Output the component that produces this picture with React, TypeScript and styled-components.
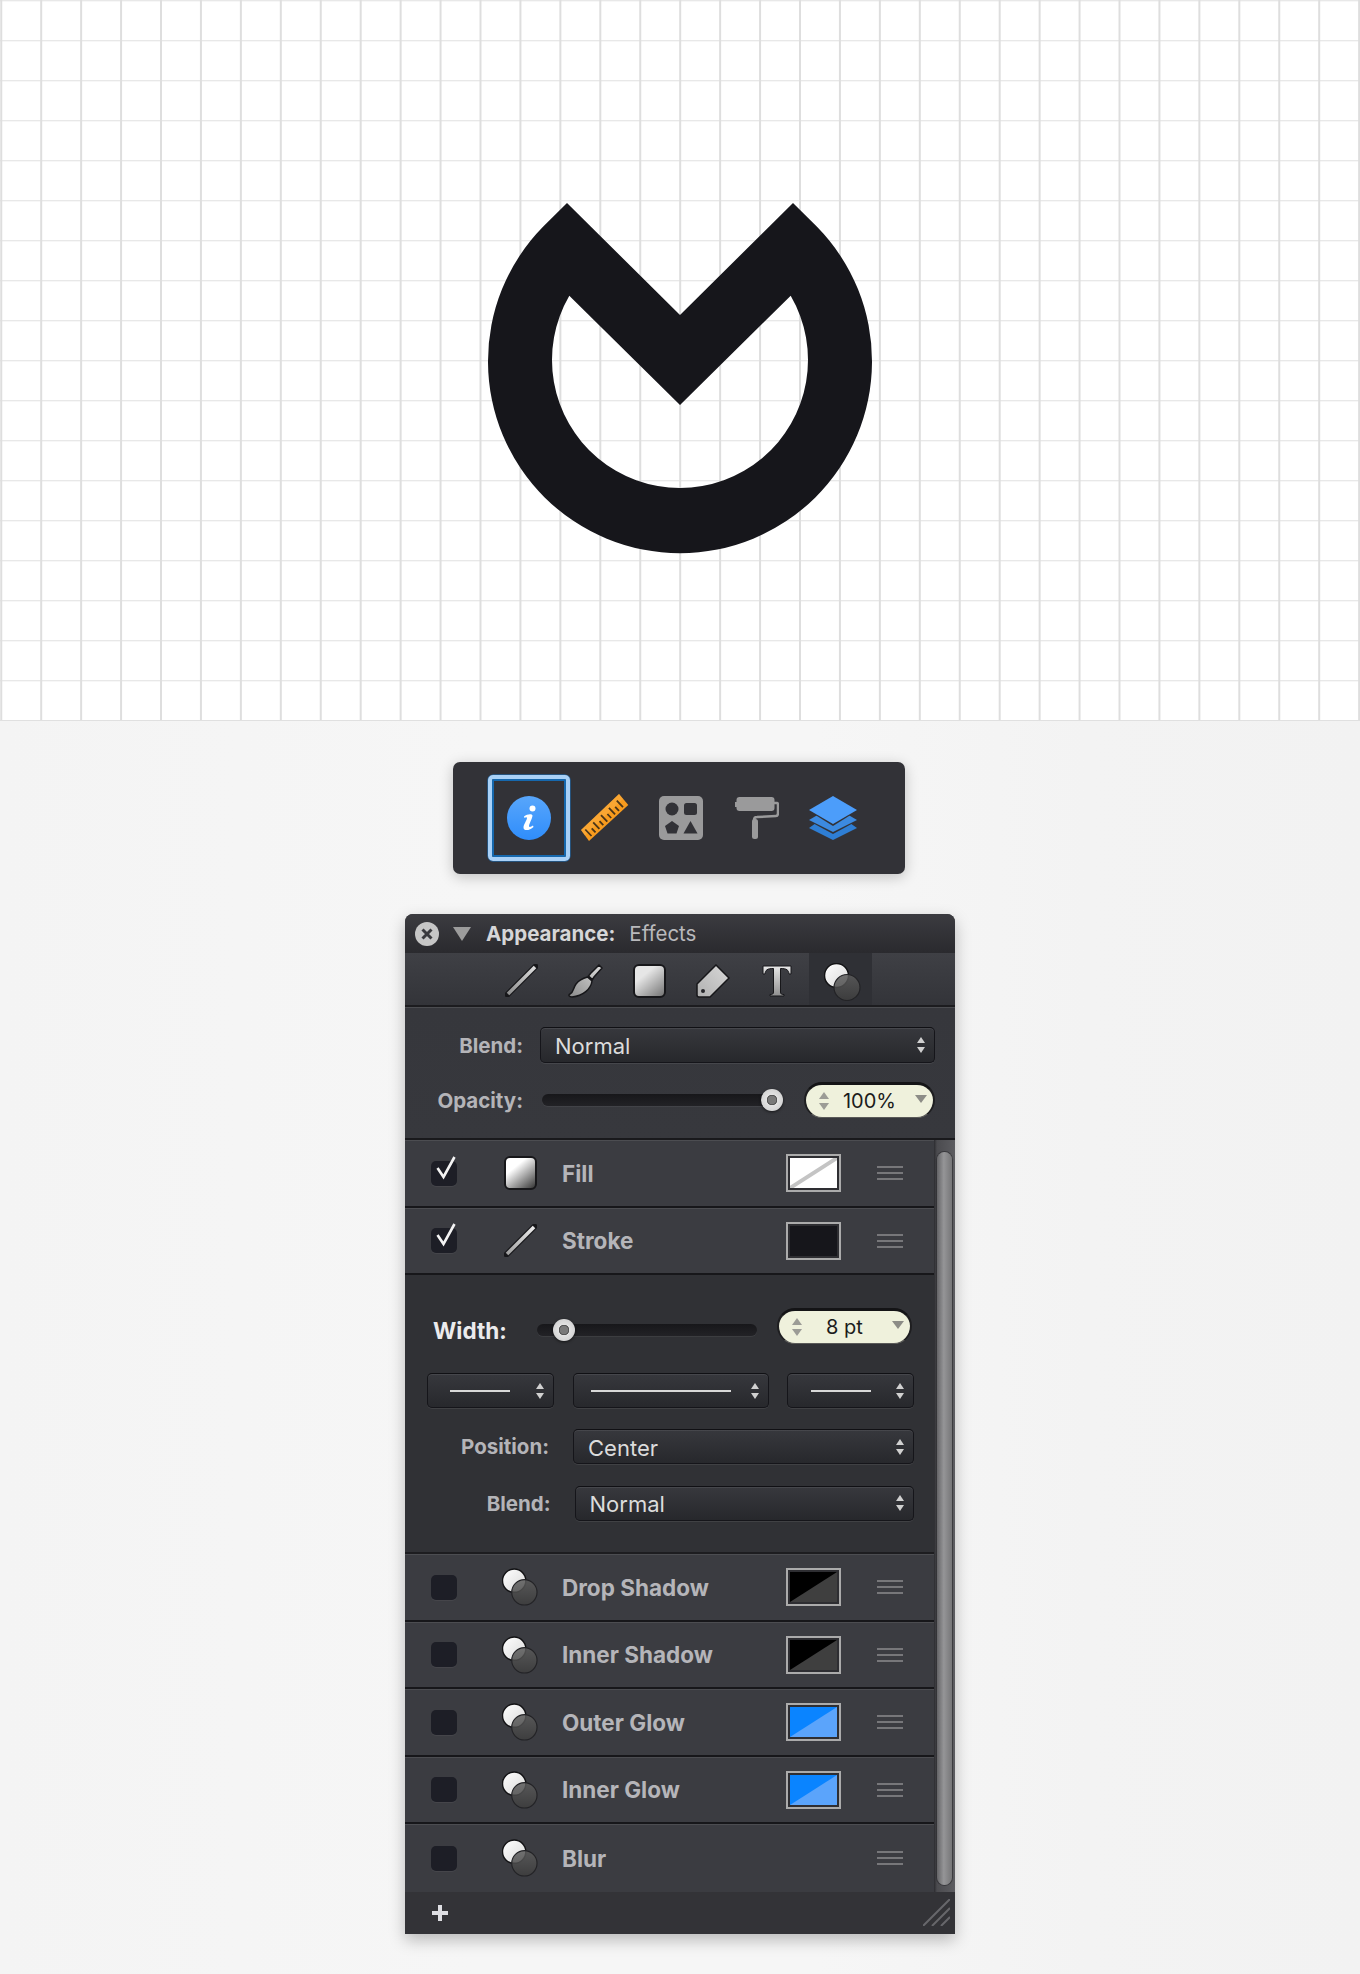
import React from 'react';
import styled, { createGlobalStyle } from 'styled-components';

const GlobalStyle = createGlobalStyle`
  html, body {
    margin: 0;
    padding: 0;
    background: #f3f3f3;
  }
  body {
    font-family: Inter, "Liberation Sans", sans-serif;
    -webkit-font-smoothing: antialiased;
  }
`;

const Page = styled.div`
  width: 1360px;
  height: 1974px;
  display: flex;
  flex-direction: column;
  align-items: center;
  background: linear-gradient(90deg, #f4f4f4 0%, #f6f6f6 35%, #f6f6f6 60%, #f3f3f3 80%, #f2f2f2 100%);
`;

const Canvas = styled.div`
  width: 100%;
  height: 721px;
  display: flex;
  align-items: flex-start;
  justify-content: center;
  padding-top: 195px;
  background-color: #fff;
  background-image:
    linear-gradient(90deg, #dedede 1.5px, transparent 1.5px),
    linear-gradient(180deg, #e0e0e0 1.5px, transparent 1.5px);
  background-size: 39.94px 40px;
  background-position: 0.25px 0.25px;
  border-bottom: 1px solid #e0e0e0;
  box-sizing: border-box;
`;

const Palette = styled.div`
  margin: 41px 2px 0 0;
  width: 452px;
  height: 112px;
  box-sizing: border-box;
  padding-left: 35px;
  display: flex;
  align-items: center;
  background: #323237;
  border-radius: 7px;
  box-shadow: 0 3px 14px rgba(0, 0, 0, 0.22);
`;

const PaletteItem = styled.div`
  width: 76px;
  height: 86px;
  flex: none;
  display: flex;
  align-items: center;
  justify-content: center;
`;

const PaletteFocus = styled.div`
  width: 82px;
  height: 86px;
  flex: none;
  margin-right: -3px;
  box-sizing: border-box;
  display: flex;
  align-items: center;
  justify-content: center;
  border: 4px solid #a9d1f7;
  border-radius: 5px;
  box-shadow: inset 0 0 0 2px #1668ad, 0 0 0 0.5px #1a74c4;
`;

const Panel = styled.div`
  margin-top: 40px;
  width: 550px;
  height: 1020px;
  display: flex;
  flex-direction: column;
  background: #333337;
  border-radius: 8px 8px 0 0;
  box-shadow: 0 6px 16px rgba(0, 0, 0, 0.25);
  overflow: hidden;
`;

const TitleBar = styled.div`
  height: 39px;
  flex: none;
  display: flex;
  align-items: center;
  padding-left: 10px;
  background: linear-gradient(180deg, #3b3b40, #2a2a2e);
`;

const CloseButton = styled.div`
  width: 24px;
  height: 24px;
  flex: none;
  display: flex;
  align-items: center;
  justify-content: center;
  border-radius: 50%;
  background: #c6c6c6;
`;

const Disclosure = styled.div`
  width: 0;
  height: 0;
  margin: 1px 15px 0 14px;
  border-left: 9px solid transparent;
  border-right: 9px solid transparent;
  border-top: 14px solid #9c9c9c;
`;

const TitleStrong = styled.span`
  font-size: 20.5px;
  font-weight: 700;
  color: #d6d6d8;
`;

const TitleLight = styled.span`
  margin-left: 14px;
  font-size: 20.5px;
  color: #b9b9bc;
`;

const TabBar = styled.div`
  height: 54px;
  flex: none;
  display: flex;
  align-items: stretch;
  padding-left: 84px;
  box-sizing: border-box;
  background: linear-gradient(180deg, #3f4045, #333439);
  border-bottom: 2px solid #1c1c1f;
`;

const Tab = styled.div<{ $active?: boolean }>`
  width: ${({ $active }) => ($active ? '63px' : '64px')};
  flex: none;
  box-sizing: border-box;
  padding: ${({ $active }) => ($active ? '6px 0 0 4px' : '3px 0 0')};
  display: flex;
  align-items: center;
  justify-content: center;
  background: ${({ $active }) => ($active ? '#2f3035' : 'transparent')};
`;

const TopForm = styled.div`
  height: 133px;
  flex: none;
  box-sizing: border-box;
  padding: 19px 20px 0 0;
  display: flex;
  flex-direction: column;
  background: linear-gradient(180deg, #36373c, #37383d);
  border-top: 1px solid #4b4c50;
  border-bottom: 2px solid #19191c;
`;

const FormRow = styled.div<{ $indent: number; $mt?: number }>`
  display: grid;
  grid-template-columns: ${({ $indent }) => $indent}px 1fr;
  column-gap: 17px;
  align-items: center;
  margin-top: ${({ $mt }) => $mt ?? 0}px;
`;

const OpacityRow = styled.div`
  display: flex;
  align-items: center;
  margin-top: 19px;
`;

const FormLabel = styled.div<{ $width?: number }>`
  width: ${({ $width }) => ($width ? `${$width}px` : 'auto')};
  flex: none;
  text-align: right;
  font-size: 20.5px;
  font-weight: 700;
  color: #b4b4b8;
`;

const WidthLabel = styled.div`
  width: 102px;
  flex: none;
  box-sizing: border-box;
  padding-left: 28px;
  font-size: 22.5px;
  font-weight: 700;
  color: #ebebed;
`;

const Select = styled.div<{ $height?: number }>`
  position: relative;
  height: ${({ $height }) => $height ?? 35}px;
  box-sizing: border-box;
  display: flex;
  align-items: center;
  padding: 2px 0 0 14px;
  border: 1px solid #15151a;
  border-top-color: #101014;
  border-radius: 5px;
  background: linear-gradient(180deg, #37383d, #27282c);
  box-shadow: inset 0 1px 0 rgba(255, 255, 255, 0.08), 0 1px 0 rgba(255, 255, 255, 0.08);
  font-size: 22px;
  color: #dcdcdc;
`;

const StepperWrap = styled.div`
  position: absolute;
  right: 9px;
  top: 50%;
  transform: translateY(-50%);
  display: flex;
  flex-direction: column;
  gap: 4px;
`;

const ArrowUp = styled.div<{ $color?: string; $size?: number }>`
  width: 0;
  height: 0;
  border-left: ${({ $size }) => $size ?? 4}px solid transparent;
  border-right: ${({ $size }) => $size ?? 4}px solid transparent;
  border-bottom: ${({ $size }) => ($size ?? 4) + 2}px solid ${({ $color }) => $color ?? '#d0d0d0'};
`;

const ArrowDown = styled.div<{ $color?: string; $size?: number }>`
  width: 0;
  height: 0;
  border-left: ${({ $size }) => $size ?? 4}px solid transparent;
  border-right: ${({ $size }) => $size ?? 4}px solid transparent;
  border-top: ${({ $size }) => ($size ?? 4) + 2}px solid ${({ $color }) => $color ?? '#d0d0d0'};
`;

const SliderTrack = styled.div<{ $width: number; $ml: number }>`
  position: relative;
  width: ${({ $width }) => $width}px;
  height: 12px;
  flex: none;
  margin-left: ${({ $ml }) => $ml}px;
  border-radius: 6px;
  background: linear-gradient(180deg, #17171a, #222226);
  box-shadow: 0 1px 0 rgba(255, 255, 255, 0.06);
`;

const SliderKnob = styled.div<{ $left: number }>`
  position: absolute;
  left: ${({ $left }) => $left}px;
  top: -5px;
  width: 22px;
  height: 22px;
  margin-left: -11px;
  box-sizing: border-box;
  border-radius: 50%;
  background: radial-gradient(circle, #7a7a7a 0 4px, #565656 4.5px 5px, #e2e2e2 5.5px, #c8c8c8 100%);
  box-shadow: 0 1px 3px rgba(0, 0, 0, 0.6);
`;

const Pill = styled.div<{ $width: number; $ml: number; $top?: boolean }>`
  position: relative;
  width: ${({ $width }) => $width}px;
  height: 36px;
  flex: none;
  margin-left: ${({ $ml }) => $ml}px;
  align-self: ${({ $top }) => ($top ? 'flex-start' : 'auto')};
  box-sizing: border-box;
  display: flex;
  align-items: center;
  justify-content: center;
  border-radius: 18px;
  background: #eff1dc;
  border-top: 3px solid #141416;
  border-bottom: 1px solid #5a5a58;
  border-left: 2px solid #1e1e20;
  border-right: 2px solid #1e1e20;
  font-size: 20px;
  color: #1b1b1b;
`;

const PillStepper = styled.div`
  position: absolute;
  left: 13px;
  top: 50%;
  transform: translateY(-50%);
  display: flex;
  flex-direction: column;
  gap: 4px;
`;

const PillCaret = styled.div`
  position: absolute;
  right: 6px;
  top: 10px;
`;

const Body = styled.div`
  flex: 1;
  display: flex;
  min-height: 0;
`;

const RowsColumn = styled.div`
  width: 529px;
  flex: none;
  display: flex;
  flex-direction: column;
`;

const ScrollColumn = styled.div`
  width: 21px;
  flex: none;
  box-sizing: border-box;
  padding: 12px 3px 7px;
  background: linear-gradient(90deg, #2c2c30 0, #4b4b4f 3px, #5c5c60 100%);
`;

const ScrollThumb = styled.div`
  height: 100%;
  border-radius: 8px;
  background: linear-gradient(90deg, #646467, #959597 45%, #767678);
  box-shadow: 0 0 0 1px rgba(40, 40, 44, 0.6);
`;

const Row = styled.div<{ $last?: boolean }>`
  height: 67.5px;
  flex: none;
  box-sizing: border-box;
  display: flex;
  align-items: center;
  padding-left: 26px;
  background: #3b3c41;
  border-top: 1px solid #4c4d51;
  border-bottom: ${({ $last }) => ($last ? 'none' : '2px solid #17171a')};
`;

const Checkbox = styled.div`
  position: relative;
  width: 26px;
  height: 25px;
  flex: none;
  border-radius: 5px;
  background: #1d1e26;
  box-shadow: 0 1px 0 rgba(255, 255, 255, 0.05);
`;

const CheckMark = styled.svg`
  position: absolute;
  left: 5px;
  top: -5px;
`;

const RowIcon = styled.div`
  width: 36px;
  height: 38px;
  flex: none;
  margin-left: 45px;
  display: flex;
  align-items: center;
  justify-content: center;
`;

const RowLabel = styled.div`
  flex: 1;
  margin-left: 24px;
  font-size: 22.5px;
  font-weight: 700;
  color: #b5b5b9;
`;

const Swatch = styled.div`
  width: 55px;
  height: 38px;
  flex: none;
  box-sizing: border-box;
  border: 2px solid #ababab;
  background: #2e2e32;
  padding: 2px;
`;

const SwatchSpacer = styled.div`
  width: 55px;
  flex: none;
`;

const SwatchArt = styled.svg`
  display: block;
`;

const Handle = styled.div`
  width: 26px;
  flex: none;
  margin: 0 31px 0 36px;
  display: flex;
  flex-direction: column;
  gap: 4px;
`;

const HandleLine = styled.div`
  height: 2px;
  background: #77777a;
`;

const StrokeForm = styled.div`
  height: 279px;
  flex: none;
  box-sizing: border-box;
  padding-top: 33px;
  display: flex;
  flex-direction: column;
  background: #303135;
  border-bottom: 2px solid #1d1d20;
`;

const WidthRow = styled.div`
  display: flex;
  align-items: center;
  height: 44px;
`;

const LineRow = styled.div`
  display: flex;
  margin: 21px 0 0 22px;
`;

const LineSelect = styled(Select)<{ $width: number; $mr?: number; $pad: number }>`
  width: ${({ $width }) => $width}px;
  margin-right: ${({ $mr }) => $mr ?? 0}px;
  padding: 0 0 0 ${({ $pad }) => $pad}px;
`;

const LineSample = styled.div<{ $width: number }>`
  width: ${({ $width }) => $width}px;
  height: 2px;
  background: #d8d8d8;
`;

const StrokeFieldRow = styled.div<{ $mt: number; $labelWidth: number }>`
  display: grid;
  grid-template-columns: ${({ $labelWidth }) => $labelWidth}px 1fr;
  column-gap: 24px;
  width: 508.5px;
  align-items: center;
  margin-top: ${({ $mt }) => $mt}px;
`;

const Footer = styled.div`
  height: 42.5px;
  flex: none;
  display: flex;
  align-items: center;
  justify-content: space-between;
  padding: 0 5px 0 27px;
  background: #333337;
`;

const PlusGlyph = styled.div`
  width: 16px;
  height: 16px;
  background:
    linear-gradient(#dedee2, #dedee2) center / 16px 4px no-repeat,
    linear-gradient(#dedee2, #dedee2) center / 4px 16px no-repeat;
`;

/* ---- drawings ---- */

const Logo = () => (
  <svg width="400" height="370" viewBox="480 195 400 370">
    <path
      fillRule="evenodd"
      fill="#16161b"
      d="M567 203 L680 315 L793 203 L817 226.7 A192 192 0 1 1 543 226.7 Z M569.3 295.7 A128 128 0 1 0 790.7 295.7 L680 405 Z"
    />
  </svg>
);

const InfoIcon = () => (
  <svg width="44" height="44" viewBox="0 0 44 44">
    <defs>
      <linearGradient id="infoFill" x1="0" y1="0" x2="0" y2="1">
        <stop offset="0" stopColor="#58a6fb" />
        <stop offset="1" stopColor="#2f8dfb" />
      </linearGradient>
    </defs>
    <circle cx="22" cy="22" r="22" fill="url(#infoFill)" />
    <circle cx="25.5" cy="12.5" r="3" fill="#fff" />
    <path fill="#fff" d="M17 20.5 C20 18 25 17.5 25.5 19.5 C25.5 22 22.5 27 22 30 C22 31.5 24 31 26 29.5 L26.5 31 C23 34.5 16.5 35.5 16.5 31.5 C16.5 28.5 20 24 20 22 C20 20.8 18.5 21.2 17.5 22 Z" />
  </svg>
);

// ticks stand on the lower right edge of the ruler, long and short in turn
const rulerTicks = [0.1, 0.2, 0.3, 0.4, 0.5, 0.6, 0.7, 0.8, 0.9].map((t, i) => {
  const x = 8 + 39.3 * t - 1.4;
  const y = 47 - 36 * t - 1.4;
  const len = i % 2 === 0 ? 9 : 5.5;
  return `M${x.toFixed(1)} ${y.toFixed(1)} L${(x - len * 0.69).toFixed(1)} ${(y - len * 0.72).toFixed(1)}`;
});

const RulerIcon = () => (
  <svg width="48" height="48" viewBox="0 0 48 48">
    <path fill="#f89b1e" d="M38 0 L47.3 11 L8 47 L0 36 Z" />
    <path fill="#fdb44c" d="M38 0 L42 5 L4 41.5 L0 36 Z" opacity="0.45" />
    <path stroke="#4a3518" strokeWidth="1.8" fill="none" d={rulerTicks.join(' ')} />
  </svg>
);

const ShapesIcon = () => (
  <svg width="44" height="44" viewBox="0 0 44 44">
    <rect width="44" height="44" rx="5" fill="#9a9a9b" />
    <circle cx="13" cy="13" r="6.5" fill="#323237" />
    <rect x="25" y="7" width="13" height="12" rx="2.5" fill="#323237" />
    <path fill="#323237" d="M13 25 L20 30 L17.5 37.5 L8.5 37.5 L6 30 Z" />
    <path fill="#323237" d="M31.5 25 L38.5 37.5 L24.5 37.5 Z" />
  </svg>
);

const RollerIcon = () => (
  <svg width="44" height="42" viewBox="0 0 44 42">
    <rect x="1.5" y="0" width="38" height="14" rx="3" fill="#9a9a9b" />
    <rect x="0" y="5" width="3" height="5" fill="#9a9a9b" />
    <path fill="none" stroke="#9a9a9b" strokeWidth="2.5" d="M39 6 L42 6 Q43 6 43 8 L43 16 Q43 19 41 19 L22 20 Q19 20 19 23 L19 28" />
    <rect x="17" y="22" width="6" height="20" rx="2.5" fill="#9a9a9b" />
  </svg>
);

const LayersIcon = () => (
  <svg width="48" height="44" viewBox="0 0 48 44">
    <path fill="#2e7ed4" d="M24 15 L48 32 L24 44 L0 32 Z" />
    <path fill="#323237" d="M24 7 L48 25 L24 38 L0 25 Z" />
    <path fill="#3c8ae0" d="M24 10 L48 24 L24 36 L0 24 Z" />
    <path fill="#323237" d="M24 0 L48 15 L24 30 L0 15 Z" />
    <path fill="#4c9dfa" d="M24 0 L48 14 L24 28 L0 14 Z" />
  </svg>
);

const CloseX = () => (
  <svg width="14" height="14" viewBox="0 0 14 14">
    <path d="M2.5 2.5 L11.5 11.5 M11.5 2.5 L2.5 11.5" stroke="#3a3a3e" strokeWidth="3" />
  </svg>
);

const LineToolIcon = ({ id, light, dark }: { id: string; light: string; dark: string }) => (
  <svg width="33" height="33" viewBox="0 0 33 33">
    <defs>
      <linearGradient id={id} x1="0" y1="1" x2="1" y2="0">
        <stop offset="0" stopColor={dark} />
        <stop offset="1" stopColor={light} />
      </linearGradient>
    </defs>
    <path d="M2.5 30.5 L30.5 2.5" stroke="#17171a" strokeWidth="6" strokeLinecap="round" />
    <path d="M3 30 L30 3" stroke={`url(#${id})`} strokeWidth="3.6" />
  </svg>
);

const BrushIcon = () => (
  <svg width="35" height="34" viewBox="0 0 35 34">
    <defs>
      <linearGradient id="brushGrad" x1="0" y1="1" x2="1" y2="0">
        <stop offset="0" stopColor="#8a8a8a" />
        <stop offset="1" stopColor="#dedede" />
      </linearGradient>
    </defs>
    <path
      fill="url(#brushGrad)"
      stroke="#17171a"
      strokeWidth="1.5"
      d="M31 1 L34 4 L26 13 L24.5 15.5 L20.5 12 L22.5 9.5 Z M19.5 13 L24 17 C23 25 15 32 4 33 C1 33 0 31 2 30 C6 28 5 24 8 20 C11 16 16 14 19.5 13 Z"
    />
  </svg>
);

const FillToolIcon = ({ id, light, dark }: { id: string; light: string; dark: string }) => (
  <svg width="33" height="34" viewBox="0 0 33 34">
    <defs>
      <linearGradient id={id} x1="0.1" y1="0" x2="0.9" y2="1">
        <stop offset="0" stopColor={light} />
        <stop offset="0.3" stopColor={light} />
        <stop offset="1" stopColor={dark} />
      </linearGradient>
    </defs>
    <rect x="1" y="1" width="31" height="32" rx="5" fill={`url(#${id})`} stroke="#17171a" strokeWidth="2" />
  </svg>
);

const TagIcon = () => (
  <svg width="34" height="34" viewBox="0 0 34 34">
    <defs>
      <linearGradient id="tagGrad" x1="0" y1="1" x2="1" y2="0">
        <stop offset="0" stopColor="#b0b0b0" />
        <stop offset="1" stopColor="#d8d8d8" />
      </linearGradient>
    </defs>
    <path
      fill="url(#tagGrad)"
      stroke="#17171a"
      strokeWidth="1.5"
      d="M20 1 L33 14 L14 33 L3 33 C1.5 33 1 32 1 31 L1 20 Z"
    />
    <circle cx="7" cy="27" r="2" fill="#26262a" />
  </svg>
);

const TypeIcon = () => (
  <svg width="30" height="32" viewBox="0 0 30 32">
    <defs>
      <linearGradient id="typeGrad" x1="0" y1="0" x2="0" y2="1">
        <stop offset="0" stopColor="#e8e8e8" />
        <stop offset="1" stopColor="#8f8f8f" />
      </linearGradient>
    </defs>
    <path
      fill="url(#typeGrad)"
      stroke="#17171a"
      strokeWidth="1"
      d="M1 1 L29 1 L29 9 L27 9 C26.5 5 25 3.5 18.5 3.5 L18.5 27 C18.5 29 19.5 29.5 22 29.5 L22 31 L8 31 L8 29.5 C10.5 29.5 11.5 29 11.5 27 L11.5 3.5 C5 3.5 3.5 5 3 9 L1 9 Z"
    />
  </svg>
);

const EffectIcon = ({ id }: { id: string }) => (
  <svg width="37" height="38" viewBox="0 0 37 38">
    <defs>
      <linearGradient id={`${id}w`} x1="0" y1="0" x2="1" y2="1">
        <stop offset="0" stopColor="#ffffff" />
        <stop offset="1" stopColor="#d8d8d8" />
      </linearGradient>
      <linearGradient id={`${id}d`} x1="0" y1="0" x2="0" y2="1">
        <stop offset="0" stopColor="#5c5c5c" />
        <stop offset="1" stopColor="#3e3e3e" />
      </linearGradient>
    </defs>
    <circle cx="12.5" cy="12.5" r="12" fill={`url(#${id}w)`} stroke="#121214" strokeWidth="1.5" />
    <circle cx="23" cy="24.5" r="13" fill={`url(#${id}d)`} fillOpacity="0.85" stroke="#232326" strokeWidth="1.2" />
  </svg>
);

const CheckIcon = () => (
  <CheckMark width="20" height="24" viewBox="0 0 20 24">
    <path d="M1.5 12 L7.5 21 L18.5 1" fill="none" stroke="#f4f4f4" strokeWidth="2.6" />
  </CheckMark>
);

const Grip = () => (
  <svg width="27" height="27" viewBox="0 0 27 27">
    <path d="M0 27 L27 0 M9 27 L27 9 M18 27 L27 18" stroke="#67676b" strokeWidth="2" />
  </svg>
);

type SwatchKind = 'none' | 'dark' | 'shadow' | 'blue';

const SwatchFill = ({ kind }: { kind: SwatchKind }) => {
  if (kind === 'none') {
    return (
      <SwatchArt width="47" height="30" viewBox="0 0 47 30">
        <rect width="47" height="30" fill="#fff" />
        <path d="M0 30 L47 0" stroke="#c4c4c4" strokeWidth="4" />
      </SwatchArt>
    );
  }
  if (kind === 'dark') {
    return (
      <SwatchArt width="47" height="30" viewBox="0 0 47 30">
        <rect width="47" height="30" fill="#16161b" />
      </SwatchArt>
    );
  }
  const a = kind === 'shadow' ? '#000000' : '#0a84ff';
  const b = kind === 'shadow' ? '#3f3f3f' : '#5ba4fb';
  return (
    <SwatchArt width="47" height="30" viewBox="0 0 47 30">
      <rect width="47" height="30" fill={b} />
      <path d="M0 0 L47 0 L0 30 Z" fill={a} />
    </SwatchArt>
  );
};

const Stepper = ({ color, size }: { color?: string; size?: number }) => (
  <>
    <ArrowUp $color={color} $size={size} />
    <ArrowDown $color={color} $size={size} />
  </>
);

const EffectRow = ({
  label,
  kind,
  checked,
  icon,
  last,
}: {
  label: string;
  kind?: SwatchKind;
  checked?: boolean;
  icon: React.ReactNode;
  last?: boolean;
}) => (
  <Row $last={last}>
    <Checkbox>{checked && <CheckIcon />}</Checkbox>
    <RowIcon>{icon}</RowIcon>
    <RowLabel>{label}</RowLabel>
    {kind ? (
      <Swatch>
        <SwatchFill kind={kind} />
      </Swatch>
    ) : (
      <SwatchSpacer />
    )}
    <Handle>
      <HandleLine />
      <HandleLine />
      <HandleLine />
    </Handle>
  </Row>
);

const effects: { label: string; kind?: SwatchKind; id: string }[] = [
  { label: 'Drop Shadow', kind: 'shadow', id: 'e1' },
  { label: 'Inner Shadow', kind: 'shadow', id: 'e2' },
  { label: 'Outer Glow', kind: 'blue', id: 'e3' },
  { label: 'Inner Glow', kind: 'blue', id: 'e4' },
  { label: 'Blur', id: 'e5' },
];

const App: React.FC = () => {
  return (
    <Page>
      <GlobalStyle />
      <Canvas>
        <Logo />
      </Canvas>

      <Palette>
        <PaletteFocus>
          <InfoIcon />
        </PaletteFocus>
        <PaletteItem>
          <RulerIcon />
        </PaletteItem>
        <PaletteItem>
          <ShapesIcon />
        </PaletteItem>
        <PaletteItem>
          <RollerIcon />
        </PaletteItem>
        <PaletteItem>
          <LayersIcon />
        </PaletteItem>
      </Palette>

      <Panel>
        <TitleBar>
          <CloseButton>
            <CloseX />
          </CloseButton>
          <Disclosure />
          <TitleStrong>Appearance:</TitleStrong>
          <TitleLight>Effects</TitleLight>
        </TitleBar>

        <TabBar>
          <Tab><LineToolIcon id="tabLine" light="#dcdcdc" dark="#8e8e8e" /></Tab>
          <Tab><BrushIcon /></Tab>
          <Tab><FillToolIcon id="tabFill" light="#e6e6e6" dark="#777777" /></Tab>
          <Tab><TagIcon /></Tab>
          <Tab><TypeIcon /></Tab>
          <Tab $active><EffectIcon id="tabEffect" /></Tab>
        </TabBar>

        <TopForm>
          <FormRow $indent={118}>
            <FormLabel>Blend:</FormLabel>
            <Select $height={36}>
              Normal
              <StepperWrap>
                <Stepper />
              </StepperWrap>
            </Select>
          </FormRow>
          <OpacityRow>
            <FormLabel $width={118}>Opacity:</FormLabel>
            <SliderTrack $width={226} $ml={19}>
              <SliderKnob $left={230} />
            </SliderTrack>
            <Pill $width={131} $ml={36}>
              <PillStepper>
                <Stepper color="#9c9c96" size={5} />
              </PillStepper>
              100%
              <PillCaret>
                <ArrowDown $color="#8c8c86" $size={6} />
              </PillCaret>
            </Pill>
          </OpacityRow>
        </TopForm>

        <Body>
          <RowsColumn>
            <EffectRow label="Fill" kind="none" checked icon={<FillToolIcon id="rowFill" light="#ffffff" dark="#3a3a3a" />} />
            <EffectRow label="Stroke" kind="dark" checked icon={<LineToolIcon id="rowLine" light="#ececec" dark="#a0a0a0" />} />

            <StrokeForm>
              <WidthRow>
                <WidthLabel>Width:</WidthLabel>
                <SliderTrack $width={220} $ml={30}>
                  <SliderKnob $left={27} />
                </SliderTrack>
                <Pill $width={135} $ml={20} $top>
                  <PillStepper>
                    <Stepper color="#9c9c96" size={5} />
                  </PillStepper>
                  8 pt
                  <PillCaret>
                    <ArrowDown $color="#8c8c86" $size={6} />
                  </PillCaret>
                </Pill>
              </WidthRow>

              <LineRow>
                <LineSelect $width={127} $mr={18.5} $pad={22}>
                  <LineSample $width={60} />
                  <StepperWrap><Stepper /></StepperWrap>
                </LineSelect>
                <LineSelect $width={196} $mr={18} $pad={17}>
                  <LineSample $width={140} />
                  <StepperWrap><Stepper /></StepperWrap>
                </LineSelect>
                <LineSelect $width={127.5} $pad={23}>
                  <LineSample $width={60} />
                  <StepperWrap><Stepper /></StepperWrap>
                </LineSelect>
              </LineRow>

              <StrokeFieldRow $mt={21} $labelWidth={144}>
                <FormLabel>Position:</FormLabel>
                <Select>
                  Center
                  <StepperWrap><Stepper /></StepperWrap>
                </Select>
              </StrokeFieldRow>

              <StrokeFieldRow $mt={21.5} $labelWidth={145.5}>
                <FormLabel>Blend:</FormLabel>
                <Select>
                  Normal
                  <StepperWrap><Stepper /></StepperWrap>
                </Select>
              </StrokeFieldRow>
            </StrokeForm>

            {effects.map((e, i) => (
              <EffectRow
                key={e.id}
                label={e.label}
                kind={e.kind}
                icon={<EffectIcon id={e.id} />}
                last={i === effects.length - 1}
              />
            ))}
          </RowsColumn>
          <ScrollColumn>
            <ScrollThumb />
          </ScrollColumn>
        </Body>

        <Footer>
          <PlusGlyph />
          <Grip />
        </Footer>
      </Panel>
    </Page>
  );
};

export default App;
